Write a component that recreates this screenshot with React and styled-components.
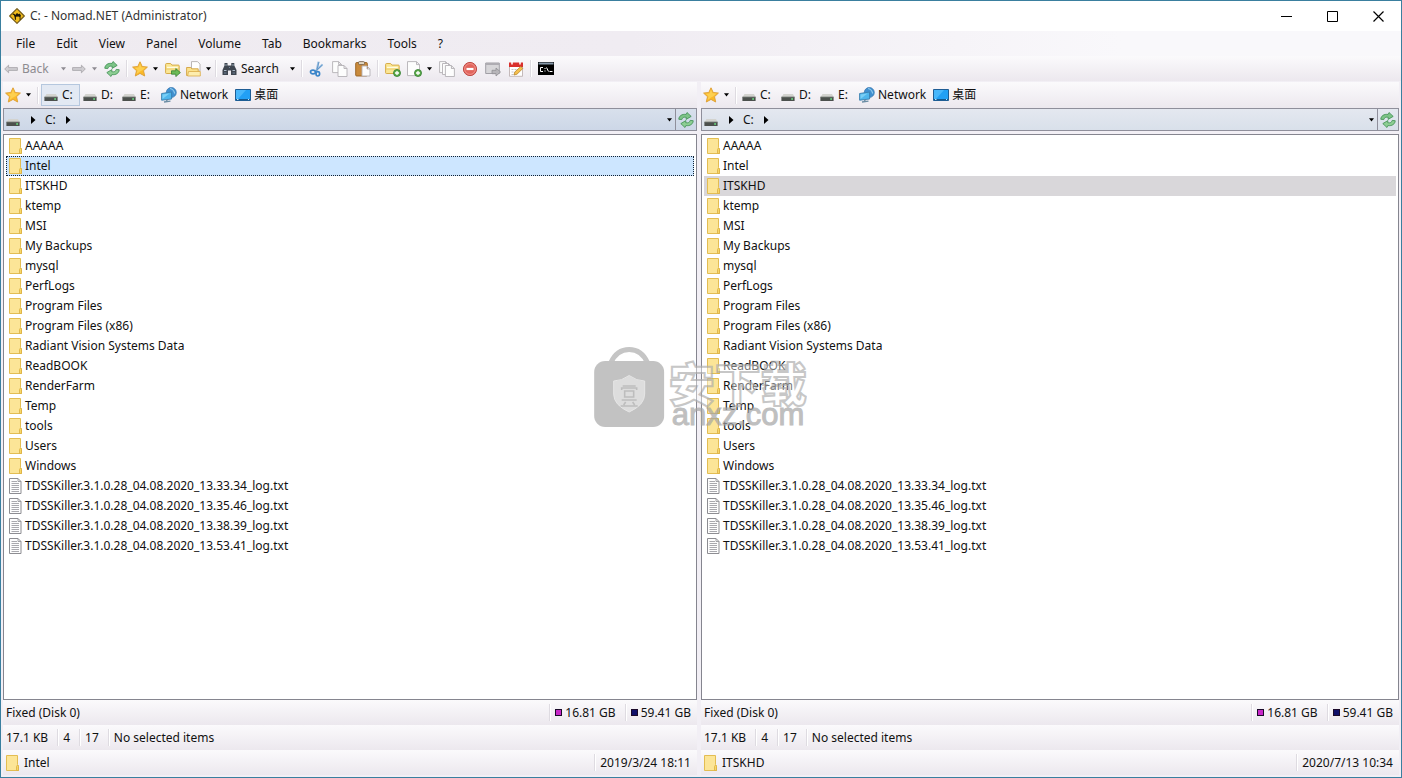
import React from 'react';
import styled, { createGlobalStyle, css } from 'styled-components';

const GlobalStyle = createGlobalStyle`
  * { box-sizing: border-box; }
  body {
    margin: 0;
    font-family: "Noto Sans", "Noto Sans CJK SC", sans-serif;
    font-size: 12px;
    line-height: 20px;
    color: #111;
  }
  button {
    font: inherit;
    color: inherit;
    background: none;
    border: 0;
    padding: 0;
    margin: 0;
  }
  ul { list-style: none; margin: 0; padding: 0; }
`;

const barFill = 'linear-gradient(#fbfafc, #ece8ee)';

const Window = styled.div`
  position: relative;
  display: flex;
  flex-direction: column;
  min-height: 100vh;
  padding-bottom: 2px;
  border: 1px solid #3a7f9f;
  background: #f2eff5;
`;

const TitleBar = styled.header`
  display: flex;
  align-items: center;
  height: 30px;
  padding-left: 8px;
  background: #fff;
  color: #333;
`;

const Title = styled.h1`
  flex: 1;
  margin: 0 0 0 5px;
  font-size: 12px;
  font-weight: 400;
`;

const WindowButton = styled.button`
  display: grid;
  place-items: center;
  width: 46px;
  height: 30px;
`;

const MenuBar = styled.nav`
  display: flex;
  align-items: center;
  height: 25px;
  gap: 1px;
  padding-left: 5px;
  background: linear-gradient(90deg, #efebf0 0%, #f0ecf2 45%, #f9f8fb 80%);
`;

const MenuItem = styled.button`
  padding: 0 10px;
`;

const ToolBar = styled.div`
  display: flex;
  align-items: center;
  height: 25px;
  background: ${barFill};
`;

const ToolButton = styled.button`
  display: flex;
  align-items: center;
  justify-content: ${(p) => (p.$start ? 'flex-start' : 'center')};
  flex: none;
  width: ${(p) => p.$width || 23}px;
  height: 23px;
  gap: 4px;
  padding-left: ${(p) => (p.$start ? 3 : 0)}px;
  ${(p) => p.$muted && css`color: #8d8b90;`}
`;

const CaretButton = styled.button`
  display: grid;
  place-items: center;
  flex: none;
  width: ${(p) => (p.$narrow ? 8 : 11)}px;
  height: 23px;
`;

const Separator = styled.span`
  flex: none;
  width: 1px;
  height: 17px;
  margin: 0 3px;
  background: #dedbe1;
  box-shadow: 1px 0 #fff;
`;

const Panels = styled.main`
  flex: 1;
  display: grid;
  grid-template-columns: 694fr 698fr;
  gap: 4px;
  padding: 0 2px;
`;

const Panel = styled.section`
  display: flex;
  flex-direction: column;
  min-width: 0;
`;

const DriveBar = styled.div`
  display: flex;
  align-items: center;
  height: 26px;
  margin-top: 1px;
  background: ${barFill};
`;

const DriveButton = styled.button`
  display: flex;
  align-items: center;
  gap: ${(p) => (p.$wide ? 3 : 4)}px;
  width: ${(p) => (p.$wide ? 'auto' : '39px')};
  height: 22px;
  padding: 0 ${(p) => (p.$wide ? 3 : 2)}px 0 2px;
  border: 1px solid ${(p) => (p.$active ? '#b5c7de' : 'transparent')};
  background: ${(p) => (p.$active ? '#e3e9f3' : 'transparent')};
`;

const AddressBar = styled.div`
  display: flex;
  align-items: center;
  height: 23px;
  border: 1px solid #8f8f9b;
  background: ${(p) => (p.$active ? 'linear-gradient(#d8e0ec, #cdd7e7)' : 'linear-gradient(#e4e8f0, #d9e0ea)')};
`;

const Crumbs = styled.div`
  flex: 1;
  display: flex;
  align-items: center;
  padding-left: 2px;
`;

const CrumbArrow = styled.button`
  display: grid;
  place-items: center;
  width: 25px;
  height: 21px;
`;

const RefreshButton = styled.button`
  display: grid;
  place-items: center;
  width: 21px;
  height: 21px;
  border-left: 1px solid #8f8f9b;
`;

const FileList = styled.ul`
  flex: 1;
  margin-top: 3px;
  padding: 1px 2px;
  border: 1px solid #85858f;
  background: #fff;
`;

const rowStates = {
  focused: css`
    background: #cde6ff;
    outline: 1px dotted #123;
    outline-offset: -1px;
  `,
  inactive: css`background: #d9d7da;`,
};

const FileRow = styled.li`
  display: flex;
  align-items: center;
  gap: 3px;
  height: 20px;
  padding-left: 3px;
  white-space: nowrap;
  ${(p) => rowStates[p.$state]}
`;

const StatusBar = styled.div`
  display: flex;
  align-items: center;
  height: 25px;
  padding: 0 6px 0 3px;
  background: ${barFill};
`;

const CurrentItem = styled.span`
  display: flex;
  align-items: center;
  gap: 5px;
`;

const Spacer = styled.span`
  flex: 1;
`;

const StatusText = styled.span`
  padding-right: ${(p) => (p.$last ? 0 : 6)}px;
  padding-left: ${(p) => (p.$first ? 0 : 2)}px;
`;

const Swatch = styled.span`
  width: 7px;
  height: 7px;
  margin: 0 3px 0 2px;
  border: 1px solid #1b0a2a;
  background: ${(p) => p.$color};
`;

const Watermark = styled.div`
  position: absolute;
  left: 50%;
  top: 345px;
  transform: translateX(-50%);
  display: flex;
  gap: 4px;
  opacity: 0.7;
  pointer-events: none;
`;

const WatermarkText = styled.div`
  display: flex;
  flex-direction: column;
  padding-top: 15px;
`;

const WatermarkName = styled.span`
  font-size: 46px;
  line-height: 44px;
  font-weight: 900;
  color: rgba(255, 255, 255, 0.6);
  -webkit-text-stroke: 2px #b0b0b0;
`;

const WatermarkSite = styled.span`
  margin-top: -4px;
  padding: 0 4px 0 3px;
  font-family: "Liberation Sans", sans-serif;
  font-size: 31px;
  line-height: 28px;
  color: #a4a4a4;
  -webkit-text-stroke: 1px #a4a4a4;
`;

/* ---------- icons ---------- */

const Icon = ({ w = 16, h = 16, children }) => (
  <svg width={w} height={h} viewBox={`0 0 ${w} ${h}`} fill="none" aria-hidden="true">
    {children}
  </svg>
);

const AppIcon = () => (
  <Icon>
    <path d="M8 .7 15.3 8 8 15.3.7 8Z" fill="#f2bd1d" stroke="#755b18" strokeWidth="1.2" strokeLinejoin="round" />
    <path d="M3.4 6.4l.8-.9 1.4.4.7 1.1 1-1.5 1.2-.2 1 1 .9-.7 1 .8.6 1.6-.5.5v3.2h-.9V8.9l-1.1-.4-2.6.3.1 3H6L5.6 9 4.8 7Z" fill="#1d1608" />
  </Icon>
);

const Caret = ({ muted }) => (
  <Icon w={7} h={4}>
    <path d="M1 .3h5L3.500 3.500Z" fill={muted ? '#8e8b92' : '#000'} />
  </Icon>
);

const CrumbTriangle = () => (
  <Icon w={6} h={8}>
    <path d="M1 0v8l4.500-4Z" fill="#000" />
  </Icon>
);

const BackArrow = ({ flip }) => (
  <Icon w={14} h={12}>
    <path
      transform={flip ? 'matrix(-1 0 0 1 14 0)' : undefined}
      d="M.7 6 4.6 2.2v2.4h8.8v2.8H4.6v2.4Z"
      fill="#cfcdd1"
      stroke="#aaa8ad"
      strokeWidth=".9"
    />
  </Icon>
);

const Refresh = () => (
  <Icon>
    <path d="M.8 7.3C.8 4 4 1.8 8.2 2.4L9 .5l4.2 3.9-5.1 3 .2-2.1C5.7 4.8 4.3 5.6 3.8 7.6Z" fill="#7cc487" stroke="#3d8e50" strokeWidth=".8" strokeLinejoin="round" />
    <path d="M15.2 8.700c0 3.300-3.200 5.500-7.400 4.900L7 15.500l-4.200-3.900 5.100-3-.2 2.100c2.600.5 4-.3 4.500-2.300Z" fill="#8dce93" stroke="#3d8e50" strokeWidth=".8" strokeLinejoin="round" />
  </Icon>
);

const Star = () => (
  <Icon>
    <path d="m8 .8 2.200 4.700 5.200.6-3.900 3.600 1.200 5.300L8 12.400 3.300 15l1.200-5.300L.6 6.100l5.200-.6Z" fill="#fbb928" stroke="#dfa33a" strokeWidth="1" strokeLinejoin="round" />
    <path d="m8 2.500 1.500 3.700 4 .4-3 2.600L8 10.500 4.600 13l.9-3.700L2.700 6.800l3.700-.4Z" fill="#fdd050" />
  </Icon>
);

const FolderShape = () => (
  <>
    <path d="M.6 3.500q0-1 1-1h4l1.300 1.600h6.500q.8 0 .8.8v6.800q0 .8-.8.8H1.400q-.8 0-.8-.8Z" fill="#fbe694" stroke="#d2a53c" strokeWidth=".9" />
    <path d="M2 6.500h10.800" stroke="#fffbe0" strokeWidth="1.400" />
    <path d="M1 8h13" stroke="#e2bd58" strokeWidth=".7" />
  </>
);

const PlusBadge = () => (
  <>
    <circle cx="12" cy="12" r="3.500" fill="#5fae4c" stroke="#2f7a2d" strokeWidth=".8" />
    <path d="M12 10v4M10 12h4" stroke="#fff" strokeWidth="1.300" />
  </>
);

const FolderGo = () => (
  <Icon>
    <FolderShape />
    <path d="M6.500 9.800h4.300V7.600l4.600 4-4.600 4v-2.400H6.500Z" fill="#6cbb55" stroke="#357d31" strokeWidth=".8" />
  </Icon>
);

const FolderOpen = () => (
  <Icon>
    <path d="M5.500.6h6l2.500 2.500v7H5.500Z" fill="#fff" stroke="#aaa6a4" strokeWidth=".8" />
    <path d="M.6 6.500h4.200l1 1.300h6.400v6.700H.6Z" fill="#fbe28c" stroke="#d2a141" strokeWidth=".9" />
    <path d="M2.500 10.500h11.800v4.500H1.600Z" fill="#fdedae" stroke="#d9aa48" strokeWidth=".8" />
  </Icon>
);

const Binoculars = () => (
  <Icon w={15} h={14}>
    <path d="M2.500 1h3v2.500h3.800V1h3v2.500L14.500 8v5H9V8.500H6V13H.5V8L2.500 3.500Z" fill="#3f4650" />
    <path d="M2 8.500h2.500M10.500 8.500H13M3.200 3h1.600M10.200 3h1.600" stroke="#a9b8c8" strokeWidth="1.200" />
    <path d="M2 11h2.500M10.500 11H13M7 5.500h1" stroke="#71839a" />
  </Icon>
);

const Scissors = () => (
  <Icon>
    <path d="M9.500.8 7.500 10M13.500 3.500 5.500 11" stroke="#9cc0e2" strokeWidth="2" />
    <path d="M10 .8 8 8.500M13.500 3.800 7 9.800" stroke="#4d86bd" strokeWidth=".7" />
    <ellipse cx="4" cy="11" rx="2.500" ry="1.900" stroke="#3984c9" strokeWidth="1.700" />
    <ellipse cx="8.800" cy="12.800" rx="1.800" ry="2.200" stroke="#3984c9" strokeWidth="1.700" />
  </Icon>
);

const Sheet = ({ x, y, w = 9, h = 11 }) => (
  <path
    d={`M${x} ${y}h${w - 3}l3 3v${h - 3}h-${w}Z m${w - 3} 0v3h3`}
    fill="#fdfdfd"
    stroke="#b4b1b6"
    strokeWidth=".9"
  />
);

const Copy = () => (
  <Icon>
    <Sheet x={0.6} y={0.6} />
    <Sheet x={6} y={4.5} />
  </Icon>
);

const Paste = () => (
  <Icon>
    <rect x=".7" y="1.500" width="11.600" height="13.500" rx="1" fill="#c98a3c" stroke="#96601f" strokeWidth=".9" />
    <rect x="3.500" y=".6" width="6" height="3" rx="1" fill="#e3d8c4" stroke="#6f5b45" strokeWidth=".8" />
    <Sheet x={7} y={5} w={8} h={10} />
  </Icon>
);

const NewFolder = () => (
  <Icon>
    <FolderShape />
    <PlusBadge />
  </Icon>
);

const NewFile = () => (
  <Icon>
    <Sheet x={1.5} y={0.6} w={12} h={14} />
    <PlusBadge />
  </Icon>
);

const Copies = () => (
  <Icon>
    <Sheet x={0.6} y={0.6} />
    <Sheet x={3.5} y={2.5} />
    <Sheet x={6.4} y={4.5} />
  </Icon>
);

const Remove = () => (
  <Icon>
    <circle cx="8" cy="8" r="6.600" fill="#e2655d" stroke="#bf4a45" />
    <circle cx="8" cy="8" r="5.400" stroke="#f3a49c" strokeWidth=".7" />
    <path d="M4.500 8h7" stroke="#fff" strokeWidth="2.200" />
  </Icon>
);

const MoveWindow = () => (
  <Icon>
    <path d="M.7 2h13.600v10.500H.7Z" fill="#d7d6d9" stroke="#a19fa5" />
    <path d="M1 3h13" stroke="#aeacb2" strokeWidth="2" />
    <path d="M7 9.300h4V7l4.500 4-4.500 4v-2.300H7Z" fill="#b7b5b9" stroke="#918f94" strokeWidth=".8" />
  </Icon>
);

const Calendar = () => (
  <Icon>
    <path d="M1.500 3h13v12.300h-13Z" fill="#fff" stroke="#b8a9a9" strokeWidth=".8" />
    <path d="M1 1.500h14V6H1Z" fill="#d92f2c" />
    <path d="M4 0v3.500M12 0v3.500" stroke="#fff" strokeWidth="1.500" />
    <path d="M3.500 8.500h7M3.500 11h4M3.500 13.500h3" stroke="#c6c2c8" strokeDasharray="2 1" />
    <path d="m6 14 .8-3 6-5.500 2 2L9 13.200Z" fill="#f5c04e" stroke="#b9862c" strokeWidth=".8" />
  </Icon>
);

const Terminal = () => (
  <Icon w={16} h={13}>
    <path d="M0 0h16v13H0Z" fill="#000" />
    <path d="M.5.5h15v2H.5Z" fill="#8798aa" />
    <path d="M5 5.500H2.500v4H5M7 6v1M7 8.500v1M8.500 5.500l2 4M11.500 9.500h3" stroke="#fff" />
  </Icon>
);

const Drive = () => (
  <Icon w={14} h={16}>
    <path d="M2.500 7h9.500l1.600 3H.6Z" fill="#d3d3cf" />
    <path d="M.4 10h13.200v4H.4Z" fill="#4c504d" />
    <path d="M.4 10h13.200" stroke="#797d79" strokeWidth=".8" />
    <path d="M10.200 12h1.800" stroke="#6be283" strokeWidth="1.400" />
  </Icon>
);

const Network = () => (
  <Icon>
    <circle cx="10.300" cy="5.500" r="5" fill="#4190d0" stroke="#3474ac" strokeWidth=".7" />
    <path d="M9 1.500q3.500.5 4.800 5" stroke="#8ecaec" strokeWidth="1.200" />
    <path d="m.6 6.500 10-1.500v7l-10 1.200Z" fill="#4fb6ec" stroke="#397eae" strokeWidth=".9" />
    <path d="m1.500 7.400 7-1-7 5.500Z" fill="#7acff6" />
    <path d="m5.500 12.500.6 2M3 15l6.500-.8" stroke="#6c8da4" strokeWidth="1.300" />
  </Icon>
);

const Desktop = () => (
  <Icon w={16} h={12}>
    <path d="M.5.5h15v11H.5Z" fill="#22a0f5" stroke="#1e5d94" />
    <path d="m1 1 10 0L3 10H1Z" fill="#48b7fb" />
    <path d="M1 10.500h14" stroke="#15598f" />
    <path d="M2 10.500h1.500M13 10.500h1" stroke="#bde5fa" />
  </Icon>
);

const Folder = () => (
  <Icon w={13} h={16}>
    <path d="M.5.5h11v9l1 1v5H.5Z" fill="#fce597" stroke="#e3bd52" />
    <path d="M10.500 15.500v-4l1-1.500 1 1.500v4Z" fill="#f8d768" stroke="#dbb043" strokeWidth=".8" />
  </Icon>
);

const TextFile = () => (
  <Icon w={13} h={16}>
    <path d="M.5.5h8.500l3 3v12H.5Z" fill="#fdfdfd" stroke="#8d8d92" />
    <path d="M9 .5v3h3" stroke="#8d8d92" strokeWidth=".8" />
    <path d="M2.500 3.500H8M2.500 5.500h7.500M2.500 7.500h7.500M2.500 9.500h7.500M2.500 11.500h7.500M2.500 13.500h7.500" stroke="#a9a9ae" />
  </Icon>
);

const Bag = () => (
  <Icon w={71} h={81}>
    <path d="M17 17C21 8 28 3.500 35.500 3.500S50 8 54 17" stroke="#adadad" strokeWidth="5" />
    <rect x=".5" y="15" width="70" height="66" rx="11" fill="#a9a9a9" />
    <path d="M35.500 29.500Q43 35 51 35v13q0 11-15.500 18Q20 59 20 48V35q8 0 15.500-5.500Z" fill="#cfcfcf" stroke="#dcdcdc" />
    <path d="M29 40h13M28 44v-2h15v2M31 45h9v6h-9ZM28 54h15M32 56l-2 3M39 56l2 3M27 60h17" stroke="#a2a2a2" strokeWidth="1.600" />
  </Icon>
);

/* ---------- data ---------- */

const menus = ['File', 'Edit', 'View', 'Panel', 'Volume', 'Tab', 'Bookmarks', 'Tools', '?'];

const folders = [
  'AAAAA', 'Intel', 'ITSKHD', 'ktemp', 'MSI', 'My Backups', 'mysql', 'PerfLogs',
  'Program Files', 'Program Files (x86)', 'Radiant Vision Systems Data', 'ReadBOOK',
  'RenderFarm', 'Temp', 'tools', 'Users', 'Windows',
];

const files = ['13.33.34', '13.35.46', '13.38.39', '13.53.41'].map(
  (time) => `TDSSKiller.3.1.0.28_04.08.2020_${time}_log.txt`
);

/* ---------- sections ---------- */

const MainToolBar = () => (
  <ToolBar role="toolbar" aria-label="Main">
    <ToolButton $width={57} $start $muted><BackArrow />Back</ToolButton>
    <CaretButton aria-label="Back history"><Caret muted /></CaretButton>
    <ToolButton $width={20} aria-label="Forward"><BackArrow flip /></ToolButton>
    <CaretButton aria-label="Forward history"><Caret muted /></CaretButton>
    <ToolButton aria-label="Refresh"><Refresh /></ToolButton>
    <Separator />
    <ToolButton $width={20} aria-label="Bookmarks"><Star /></ToolButton>
    <CaretButton aria-label="Bookmark list"><Caret /></CaretButton>
    <ToolButton aria-label="Go to folder"><FolderGo /></ToolButton>
    <ToolButton $width={20} aria-label="Open folder"><FolderOpen /></ToolButton>
    <CaretButton $narrow aria-label="Recent folders"><Caret /></CaretButton>
    <Separator />
    <ToolButton $width={68} $start><Binoculars />Search</ToolButton>
    <CaretButton aria-label="Search options"><Caret /></CaretButton>
    <Separator />
    <ToolButton aria-label="Cut"><Scissors /></ToolButton>
    <ToolButton aria-label="Copy"><Copy /></ToolButton>
    <ToolButton aria-label="Paste"><Paste /></ToolButton>
    <Separator />
    <ToolButton aria-label="New folder"><NewFolder /></ToolButton>
    <ToolButton $width={20} aria-label="New file"><NewFile /></ToolButton>
    <CaretButton aria-label="New file types"><Caret /></CaretButton>
    <ToolButton aria-label="Copy to"><Copies /></ToolButton>
    <ToolButton aria-label="Delete"><Remove /></ToolButton>
    <ToolButton aria-label="Move to"><MoveWindow /></ToolButton>
    <ToolButton aria-label="Edit properties"><Calendar /></ToolButton>
    <Separator />
    <ToolButton aria-label="Command prompt"><Terminal /></ToolButton>
  </ToolBar>
);

const FilePanel = ({ active, current, date }) => (
  <Panel>
    <DriveBar>
      <ToolButton $width={20} aria-label="Favourites"><Star /></ToolButton>
      <CaretButton aria-label="Favourites list"><Caret /></CaretButton>
      <Separator />
      <DriveButton $active={active}><Drive />C:</DriveButton>
      <DriveButton><Drive />D:</DriveButton>
      <DriveButton><Drive />E:</DriveButton>
      <DriveButton $wide><Network />Network</DriveButton>
      <DriveButton $wide lang="zh"><Desktop />桌面</DriveButton>
    </DriveBar>
    <AddressBar $active={active}>
      <Crumbs>
        <Drive />
        <CrumbArrow aria-label="Drives"><CrumbTriangle /></CrumbArrow>
        <button>C:</button>
        <CrumbArrow aria-label="Subfolders"><CrumbTriangle /></CrumbArrow>
      </Crumbs>
      <CaretButton aria-label="Address history"><Caret /></CaretButton>
      <RefreshButton aria-label="Refresh panel"><Refresh /></RefreshButton>
    </AddressBar>
    <FileList>
      {folders.map((name) => (
        <FileRow key={name} $state={name === current ? (active ? 'focused' : 'inactive') : 'plain'}>
          <Folder />{name}
        </FileRow>
      ))}
      {files.map((name) => (
        <FileRow key={name}><TextFile />{name}</FileRow>
      ))}
    </FileList>
    <StatusBar>
      <StatusText $first>Fixed (Disk 0)</StatusText>
      <Spacer />
      <Separator />
      <Swatch $color="#c828c8" />
      <StatusText $first>16.81 GB</StatusText>
      <Separator />
      <Swatch $color="#10106a" />
      <span>59.41 GB</span>
    </StatusBar>
    <StatusBar>
      <StatusText $first>17.1 KB</StatusText>
      <Separator />
      <StatusText>4</StatusText>
      <Separator />
      <StatusText>17</StatusText>
      <Separator />
      <StatusText>No selected items</StatusText>
    </StatusBar>
    <StatusBar>
      <CurrentItem><Folder />{current}</CurrentItem>
      <Spacer />
      <Separator />
      <StatusText $last>{date}</StatusText>
    </StatusBar>
  </Panel>
);

export default function App() {
  return (
    <>
      <GlobalStyle />
      <Window>
        <TitleBar>
          <AppIcon />
          <Title>C: - Nomad.NET (Administrator)</Title>
          <WindowButton aria-label="Minimize">
            <Icon w={11} h={11}><path d="M0 5.500h11" stroke="#000" /></Icon>
          </WindowButton>
          <WindowButton aria-label="Maximize">
            <Icon w={11} h={11}><path d="M.5.5h10v10H.5Z" stroke="#000" /></Icon>
          </WindowButton>
          <WindowButton aria-label="Close">
            <Icon w={11} h={11}><path d="m.5.5 10 10m0-10-10 10" stroke="#000" strokeWidth="1.200" /></Icon>
          </WindowButton>
        </TitleBar>
        <MenuBar>
          {menus.map((name) => <MenuItem key={name}>{name}</MenuItem>)}
        </MenuBar>
        <MainToolBar />
        <Panels>
          <FilePanel active current="Intel" date="2019/3/24 18:11" />
          <FilePanel current="ITSKHD" date="2020/7/13 10:34" />
        </Panels>
        <Watermark aria-hidden="true">
          <Bag />
          <WatermarkText>
            <WatermarkName lang="zh">安下载</WatermarkName>
            <WatermarkSite>anxz.com</WatermarkSite>
          </WatermarkText>
        </Watermark>
      </Window>
    </>
  );
}
